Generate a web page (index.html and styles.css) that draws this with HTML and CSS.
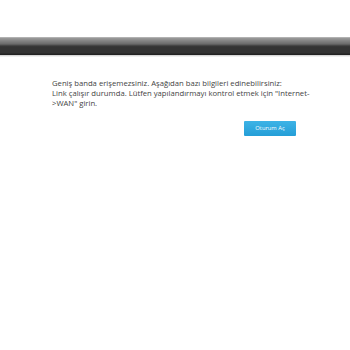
FILE: index.html
```html
<!DOCTYPE html>
<html>
<head>
<meta charset="utf-8">
<link rel="stylesheet" href="styles.css">
</head>
<body>
<div class="top"></div>
<div class="bar"></div>
<div class="content">
  <p class="msg">Geniş banda erişemezsiniz. Aşağıdan bazı bilgileri edinebilirsiniz:<br>Link çalışır durumda. Lütfen yapılandırmayı kontrol etmek için "Internet-&gt;WAN" girin.</p>
  <div class="actions"><button class="login">Oturum Aç</button></div>
</div>
</body>
</html>
```
FILE: styles.css
```css
html, body { margin: 0; padding: 0; background: #fff; }
body { width: 350px; height: 350px; overflow: hidden; font-family: "Open Sans", "Noto Sans", sans-serif; }
.top { height: 37px; }
.bar {
  height: 18px;
  background: linear-gradient(to bottom, #c8c8c8 0, #9a9a9a 1px, #8a8a8a 3px, #6a6a6a 7px, #3a3a3a 9px, #333 10px, #333 16px, #222 17px, #222 18px);
  box-shadow: 0 1px 0 #d6d6d6, 0 2px 0 #efefef;
}
.content { padding: 24px 0 0 52px; width: 262px; }
.msg { margin: 0; font-size: 7.7px; line-height: 9.8px; color: #444; }
.actions { display: flex; justify-content: flex-end; padding: 13px 18px 0 0; }
.login {
  width: 52px; height: 15px; padding: 0; border: 0; border-radius: 1px;
  background: linear-gradient(to bottom, #3db3e6, #249ed7);
  color: #fff; font-family: inherit; font-size: 5.8px; line-height: 15px;
}
```
